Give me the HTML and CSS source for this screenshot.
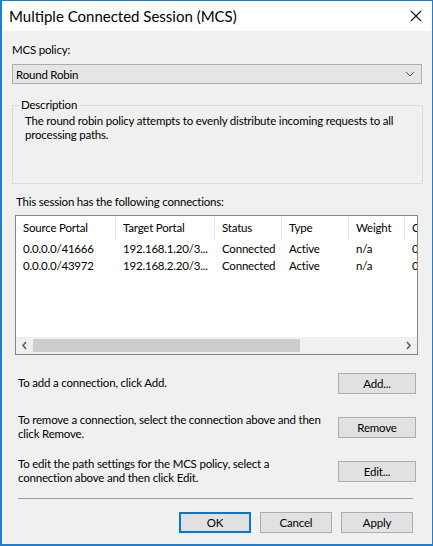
FILE: index.html
```html
<!DOCTYPE html>
<html lang="en">
<head>
    <meta charset="UTF-8">
    <title>Multiple Connected Session (MCS)</title>
    <link rel="stylesheet" href="styles.css">
</head>
<body>
    <div class="window">
        <div class="titlebar">
            <span class="title">Multiple Connected Session (MCS)</span>
            <svg class="close" width="12" height="12" viewBox="0 0 12 12">
                <path d="M1 1 L11 11 M11 1 L1 11" stroke="#111" stroke-width="1.1" fill="none"/>
            </svg>
        </div>

        <div class="content">
            <div class="label">MCS policy:</div>
            <div class="combo">
                <span>Round Robin</span>
                <svg width="10" height="6" viewBox="0 0 10 6">
                    <path d="M1 1 L5 5 L9 1" stroke="#555" stroke-width="1" fill="none"/>
                </svg>
            </div>

            <fieldset class="group">
                <legend>Description</legend>
                <p>The round robin policy attempts to evenly distribute incoming requests to all processing paths.</p>
            </fieldset>

            <div class="label list-label">This session has the following connections:</div>
            <div class="listview">
                <div class="lv-rows">
                    <div class="row header">
                        <span class="c1">Source Portal</span>
                        <span class="c2">Target Portal</span>
                        <span class="c3">Status</span>
                        <span class="c4">Type</span>
                        <span class="c5">Weight</span>
                        <span class="c6">C</span>
                    </div>
                    <div class="row">
                        <span class="c1">0.0.0.0/41666</span>
                        <span class="c2">192.168.1.20/3...</span>
                        <span class="c3">Connected</span>
                        <span class="c4">Active</span>
                        <span class="c5">n/a</span>
                        <span class="c6">0</span>
                    </div>
                    <div class="row">
                        <span class="c1">0.0.0.0/43972</span>
                        <span class="c2">192.168.2.20/3...</span>
                        <span class="c3">Connected</span>
                        <span class="c4">Active</span>
                        <span class="c5">n/a</span>
                        <span class="c6">0</span>
                    </div>
                </div>
                <div class="hscroll">
                    <svg width="17" height="17" viewBox="0 0 17 17">
                        <path d="M10 5 L7 8.5 L10 12" stroke="#606060" stroke-width="1.6" fill="none"/>
                    </svg>
                    <div class="track"><div class="thumb"></div></div>
                    <svg width="17" height="17" viewBox="0 0 17 17">
                        <path d="M7 5 L10 8.5 L7 12" stroke="#606060" stroke-width="1.6" fill="none"/>
                    </svg>
                </div>
            </div>

            <div class="actions">
                <div class="action">
                    <p>To add a connection, click Add.</p>
                    <button class="btn">Add...</button>
                </div>
                <div class="action">
                    <p>To remove a connection, select the connection above and then click Remove.</p>
                    <button class="btn">Remove</button>
                </div>
                <div class="action">
                    <p>To edit the path settings for the MCS policy, select a connection above and then click Edit.</p>
                    <button class="btn">Edit...</button>
                </div>
            </div>

            <div class="separator"></div>

            <div class="footer">
                <button class="btn default">OK</button>
                <button class="btn">Cancel</button>
                <button class="btn">Apply</button>
            </div>
        </div>
    </div>
</body>
</html>
```

FILE: styles.css
```css
html, body {
    margin: 0;
    padding: 0;
    background: #f0f0f0;
}

body {
    font-family: Lato, "Noto Sans", sans-serif;
    font-size: 11.5px;
    letter-spacing: -0.2px;
    color: #000;
}

.window {
    width: 433px;
    height: 546px;
    box-sizing: border-box;
    border: 1px solid #1a7fd1;
    border-left-width: 2px;
    border-bottom-width: 2px;
    background: #f0f0f0;
}

.titlebar {
    height: 30px;
    background: #fff;
    display: flex;
    align-items: center;
    justify-content: space-between;
    padding: 0 10px 0 7px;
}

.title {
    font-size: 15px;
    letter-spacing: 0;
    color: #000;
}

.content {
    padding: 11px 9px 0 10px;
}

.label {
    line-height: 16px;
}

.combo {
    margin-top: 6px;
    height: 20px;
    box-sizing: border-box;
    border: 1px solid #adadad;
    background: #e5e5e5;
    display: flex;
    align-items: center;
    justify-content: space-between;
    padding: 0 6px 0 3px;
    width: 410px;
}

.group {
    margin: 14px 0 0 0;
    width: 411px;
    height: 86px;
    box-sizing: border-box;
    border: 1px solid #dcdcdc;
    padding: 0 10px 0 12px;
}

.group legend {
    padding: 0 2px;
    margin-left: -6px;
    line-height: 14px;
}

.group p {
    margin: 2px 0 0;
    line-height: 14px;
}

.list-label {
    margin: 10px 0 0 4px;
}

.listview {
    margin: 5px 0 0 3px;
    width: 403px;
    height: 140px;
    box-sizing: border-box;
    border: 1px solid #828790;
    background: #fff;
    display: flex;
    flex-direction: column;
    overflow: hidden;
}

.lv-rows {
    flex: 1;
}

.row {
    display: flex;
    height: 17px;
    line-height: 17px;
    white-space: nowrap;
}

.row.header {
    height: 24px;
    line-height: 24px;
}

.row span {
    padding-left: 7px;
    box-sizing: border-box;
}

.row.header span {
    border-right: 1px solid #e5e5e5;
}

.c1 { width: 100px; flex: none; }
.c2 { width: 99px; flex: none; }
.c3 { width: 67px; flex: none; }
.c4 { width: 67px; flex: none; }
.c5 { width: 56px; flex: none; }
.c6 { width: 40px; flex: none; }

.hscroll {
    height: 17px;
    display: flex;
    background: #f0f0f0;
}

.hscroll svg {
    flex: none;
}

.track {
    flex: 1;
    display: flex;
    align-items: center;
}

.thumb {
    width: 267px;
    height: 13px;
    background: #cdcdcd;
}

.actions {
    margin-top: 6px;
}

.action {
    display: flex;
    align-items: center;
    justify-content: space-between;
    height: 44px;
}

.action p {
    margin: 0 0 0 6px;
    width: 306px;
    line-height: 14px;
}

.btn {
    font-family: inherit;
    font-size: 11.5px;
    letter-spacing: inherit;
    width: 78px;
    height: 21px;
    box-sizing: border-box;
    border: 1px solid #adadad;
    background: #e1e1e1;
    color: #000;
    padding: 0;
    margin-right: 7px;
}

.btn.default {
    border: 2px solid #0078d7;
}

.separator {
    margin: 5px 10px 0 6px;
    border-top: 1px solid #a0a0a0;
}

.footer {
    display: flex;
    justify-content: flex-end;
    gap: 9px;
    margin-top: 13px;
    padding-right: 10px;
}

.footer .btn {
    width: 72px;
    margin-right: 0;
}
```
